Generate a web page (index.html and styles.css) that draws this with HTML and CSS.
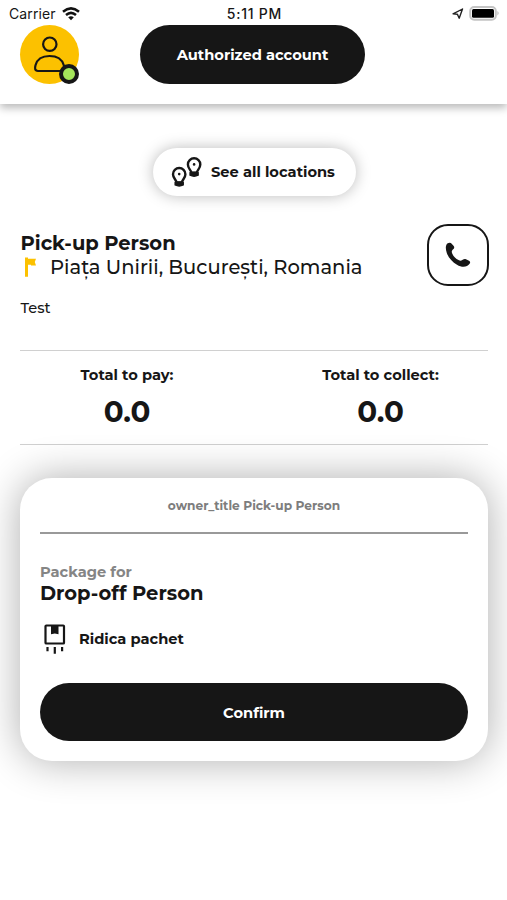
FILE: index.html
```html
<!DOCTYPE html>
<html lang="en">
<head>
<meta charset="utf-8">
<title>Authorized account</title>
<link rel="stylesheet" href="styles.css">
</head>
<body>
<header class="header">
  <div class="status">
    <div class="carrier"><span>Carrier</span>
      <svg width="18" height="14" viewBox="0 0 18 14" fill="none" stroke="#111" stroke-width="2.5"><path d="M1 4.7Q9-2 17 4.7M4 8Q9 3.7 14 8"/><path d="M6.2 10.3Q9 8 11.8 10.3L9 13.2Z" fill="#111" stroke="none"/></svg>
    </div>
    <div class="time">5:11 PM</div>
    <div class="indicators">
      <svg width="12" height="12" viewBox="0 0 12 12" fill="none" stroke="#222" stroke-width="1.4" stroke-linejoin="round"><path d="M10.5 1 1 5.8 5.4 6.2 7.2 10.2Z"/></svg>
      <svg width="31" height="15" viewBox="0 0 31 15"><rect x="1.2" y="1" width="25.6" height="12.8" rx="4" fill="#fff" stroke="#c4c4c4" stroke-width="2"/><rect x="3" y="3" width="22" height="8.8" rx="1.5" fill="#000"/><path d="M28.4 5Q31 7.2 28.4 9.5Z" fill="#bdbdbd"/></svg>
    </div>
  </div>
  <div class="account-row">
    <div class="avatar">
      <svg width="59" height="59" viewBox="0 0 59 59" fill="none" stroke="#161616" stroke-width="2.2"><circle cx="29.8" cy="19.2" r="6.7"/><path d="M18 46C14.5 46 14.8 42.8 15.5 40.2C17.2 34 22 31 29.5 31S42 34 43.8 40.2C44.5 43 44.5 46 41 46Z"/></svg>
      <span class="online"></span>
    </div>
    <button class="dark-button account">Authorized account</button>
  </div>
</header>
<main class="content">
  <button class="locations">
    <svg width="32" height="32" viewBox="0 0 32 32" fill="none" stroke="#161616" stroke-width="2.4"><g id="pin"><path d="M5.6 26.5C5 23.6 2 22.1 2 18.2A6.2 6.2 0 0 1 14.4 18.2C14.4 22.1 11.4 23.6 10.8 26.5Z"/><path d="M4.2 26.3V28.9Q8.2 30.9 12.2 28.9V26.3Z" fill="#161616" stroke-width="1.5" stroke-linejoin="round"/><circle cx="8.2" cy="18.1" r="1.3" fill="#161616" stroke="none"/></g><use href="#pin" x="14.9" y="-9.7"/></svg>
    <span>See all locations</span>
  </button>
  <section class="person">
    <div class="details">
      <h1>Pick-up Person</h1>
      <div class="address"><svg width="12" height="21" viewBox="0 0 12 21" fill="#fcc100"><path d="M0 .5H3V1.8H11L9.8 5.1 11 8.6H6V7.7H3V19.7H0Z"/></svg><span>Piața Unirii, București, Romania</span></div>
      <p class="note">Test</p>
    </div>
    <button class="call" aria-label="Call"><svg width="26" height="26" viewBox="0 0 26 26" fill="#161616"><path d="M2.7 1.3C4.3.4 6 .7 6.9 1.9L8.7 4.1C9.7 5.4 9.2 6.3 8.2 7.3C6.9 8.6 6.3 9.4 7.2 11.5C8.5 14.5 10.7 16.6 13.5 18.1C15.5 19.2 16.8 18.8 18.1 17.6C19 16.8 19.9 16.7 21 17.2L24 18.7C25.3 19.4 25.5 20.4 24.6 21.8C22 25.6 16.8 25.7 12 22.8C7.5 20 3.4 15.8 1.8 11C.5 7.4.2 3 2.7 1.3Z"/></svg></button>
  </section>
  <section class="totals">
    <div><h2>Total to pay:</h2><strong>0.0</strong></div>
    <div><h2>Total to collect:</h2><strong>0.0</strong></div>
  </section>
  <section class="card">
    <div class="owner">owner_title Pick-up Person</div>
    <div class="package-label">Package for</div>
    <div class="recipient">Drop-off Person</div>
    <div class="pickup">
      <svg width="22" height="31" viewBox="0 0 22 31" fill="none" stroke="#161616" stroke-width="2.2"><rect x="1.5" y="1.5" width="18.5" height="18" rx=".8"/><path d="M7 1.5H14.5V10.3L10.8 9.5 7 10.3Z" fill="#161616" stroke="none"/><path d="M3.5 23v4.2M10.8 23v6.8M18.1 23v4.2"/></svg>
      <span>Ridica pachet</span>
    </div>
    <button class="dark-button confirm">Confirm</button>
  </section>
</main>
</body>
</html>
```
FILE: styles.css
```css
* { box-sizing: border-box; }
body {
  margin: 0;
  min-height: 900px;
  overflow: hidden;
  background: #fff;
  color: #161616;
  font-family: Montserrat, Inter, sans-serif;
}
button { border: 0; padding: 0; font: inherit; color: inherit; }
h1, h2, p { margin: 0; }
svg { display: block; flex: none; }
.header {
  height: 104px;
  background: #fff;
  box-shadow: 0 4px 8px rgba(0, 0, 0, .27);
}
.status {
  display: grid;
  grid-template-columns: 1fr auto 1fr;
  align-items: center;
  height: 25px;
  padding: 2px 7px 0 9px;
  font: 400 14px/20px Inter, sans-serif;
}
.carrier { display: flex; align-items: center; gap: 6px; letter-spacing: .1px; }
.time { font-weight: 500; letter-spacing: .75px; }
.indicators { display: flex; justify-content: flex-end; align-items: center; gap: 5px; }
.account-row {
  display: grid;
  grid-template-columns: 59px 225px;
  column-gap: 61px;
  padding-left: 20px;
}
.avatar { position: relative; height: 59px; border-radius: 50%; background: #fcc100; }
.online {
  position: absolute;
  right: 0;
  bottom: 0;
  width: 20px;
  height: 20px;
  border: 4px solid #161616;
  border-radius: 50%;
  background: #a5e65a;
}
.dark-button {
  display: block;
  height: 59px;
  border-radius: 30px;
  background: #161616;
  color: #fff;
  font-size: 14.65px;
  font-weight: 700;
}
.content { padding: 44px 19px 0 20px; }
.locations {
  display: flex;
  align-items: center;
  gap: 8px;
  width: 203px;
  height: 48px;
  margin: 0 auto;
  padding-left: 18.5px;
  border-radius: 24px;
  background: #fff;
  box-shadow: 0 0 15px rgba(0, 0, 0, .27);
  font-size: 14.65px;
  font-weight: 700;
}
.locations span { margin-top: -1px; }
.person { display: flex; justify-content: space-between; margin-top: 28px; height: 126px; }
.details { padding: 7px 0 0 .5px; }
.person h1 { font-size: 19.5px; font-weight: 700; line-height: 24px; }
.address { display: flex; align-items: center; gap: 13px; padding-left: 4.5px; font-size: 19.5px; font-weight: 500; line-height: 24px; white-space: nowrap; }
.note { margin-top: 19px; font-size: 14.65px; font-weight: 500; line-height: 20px; }
.call {
  display: grid;
  place-items: center;
  width: 62px;
  height: 62px;
  margin-right: -1px;
  border: 2px solid #161616;
  border-radius: 21px;
  background: #fff;
}
.totals {
  display: grid;
  grid-template-columns: 214px 214px;
  justify-content: space-between;
  height: 95px;
  padding-top: 14px;
  border: solid #d0d0d0;
  border-width: 1px 0;
  text-align: center;
}
.totals h2 { font-size: 14.65px; font-weight: 700; line-height: 20px; }
.totals strong { display: block; margin-top: 9px; font-size: 29.3px; line-height: 36px; }
.totals div + div { margin-right: 1px; }
.card {
  height: 283px;
  margin-top: 33px;
  padding: 0 20px;
  border-radius: 32px;
  background: #fff;
  box-shadow: 0 0 42px rgba(0, 0, 0, .32);
}
.owner { height: 56px; padding-top: 19px; border-bottom: 2px solid #999; color: #7d7d7d; font-size: 12.2px; font-weight: 700; line-height: 18px; text-align: center; }
.package-label { margin-top: 28px; color: #858585; font-size: 14.65px; font-weight: 700; line-height: 20px; }
.recipient { font-size: 19.5px; font-weight: 700; line-height: 22px; }
.pickup { display: flex; align-items: center; gap: 13px; height: 32px; margin-top: 19px; padding-left: 4px; font-size: 14.65px; font-weight: 700; }
.confirm { width: 100%; height: 58px; margin-top: 28px; padding-top: 1px; }
```
